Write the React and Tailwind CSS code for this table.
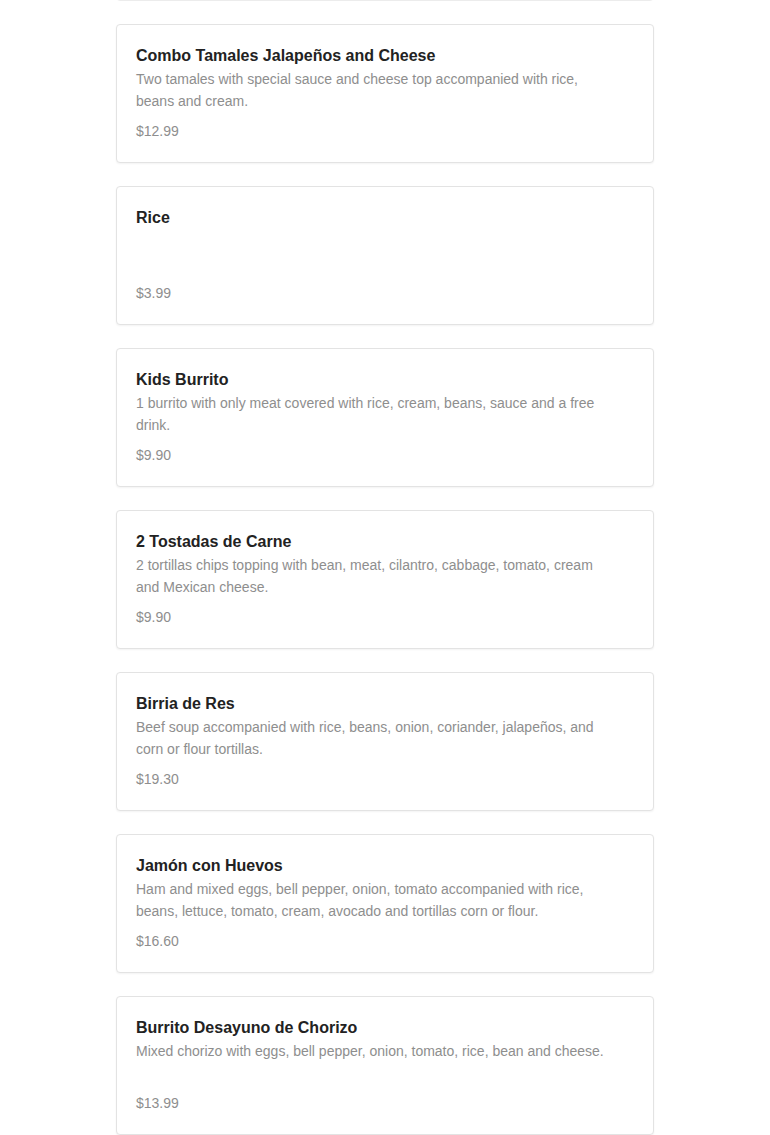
import React from 'react';

const items = [
  { name: 'Combo Tamales Jalapeños and Cheese', desc: 'Two tamales with special sauce and cheese top accompanied with rice, beans and cream.', price: '$12.99' },
  { name: 'Rice', desc: '', price: '$3.99' },
  { name: 'Kids Burrito', desc: '1 burrito with only meat covered with rice, cream, beans, sauce and a free drink.', price: '$9.90' },
  { name: '2 Tostadas de Carne', desc: '2 tortillas chips topping with bean, meat, cilantro, cabbage, tomato, cream and Mexican cheese.', price: '$9.90' },
  { name: 'Birria de Res', desc: 'Beef soup accompanied with rice, beans, onion, coriander, jalapeños, and corn or flour tortillas.', price: '$19.30' },
  { name: 'Jamón con Huevos', desc: 'Ham and mixed eggs, bell pepper, onion, tomato accompanied with rice, beans, lettuce, tomato, cream, avocado and tortillas corn or flour.', price: '$16.60' },
  { name: 'Burrito Desayuno de Chorizo', desc: 'Mixed chorizo with eggs, bell pepper, onion, tomato, rice, bean and cheese.', price: '$13.99' },
];

const MenuCard = ({ item }) => (
  <div className="h-[139px] bg-white border border-[#e3e3e3] rounded-[4px] shadow-[0_1px_2px_rgba(0,0,0,0.05)] px-[19px] pt-[20px]">
    <h3 className="text-[16px] leading-[22px] font-bold text-[#222222]">{item.name}</h3>
    <p className="mt-[1px] h-[44px] max-w-[476px] text-[14px] leading-[22px] text-[#8e8e8e]">{item.desc}</p>
    <p className="mt-[9px] text-[14px] leading-[20px] text-[#8e8e8e]">{item.price}</p>
  </div>
);

const App = () => {
  return (
    <div className="min-h-screen bg-white overflow-hidden font-['Liberation_Sans',Arial,sans-serif]">
      <div className="w-[538px] mx-auto -mt-[138px] flex flex-col gap-[23px]">
        {/* carte précédente, presque entièrement hors de l'écran */}
        <div className="h-[139px] bg-white border border-[#ececec] rounded-[4px]" />
        {items.map((item, i) => (
          <MenuCard key={i} item={item} />
        ))}
      </div>
    </div>
  );
};

export default App;
